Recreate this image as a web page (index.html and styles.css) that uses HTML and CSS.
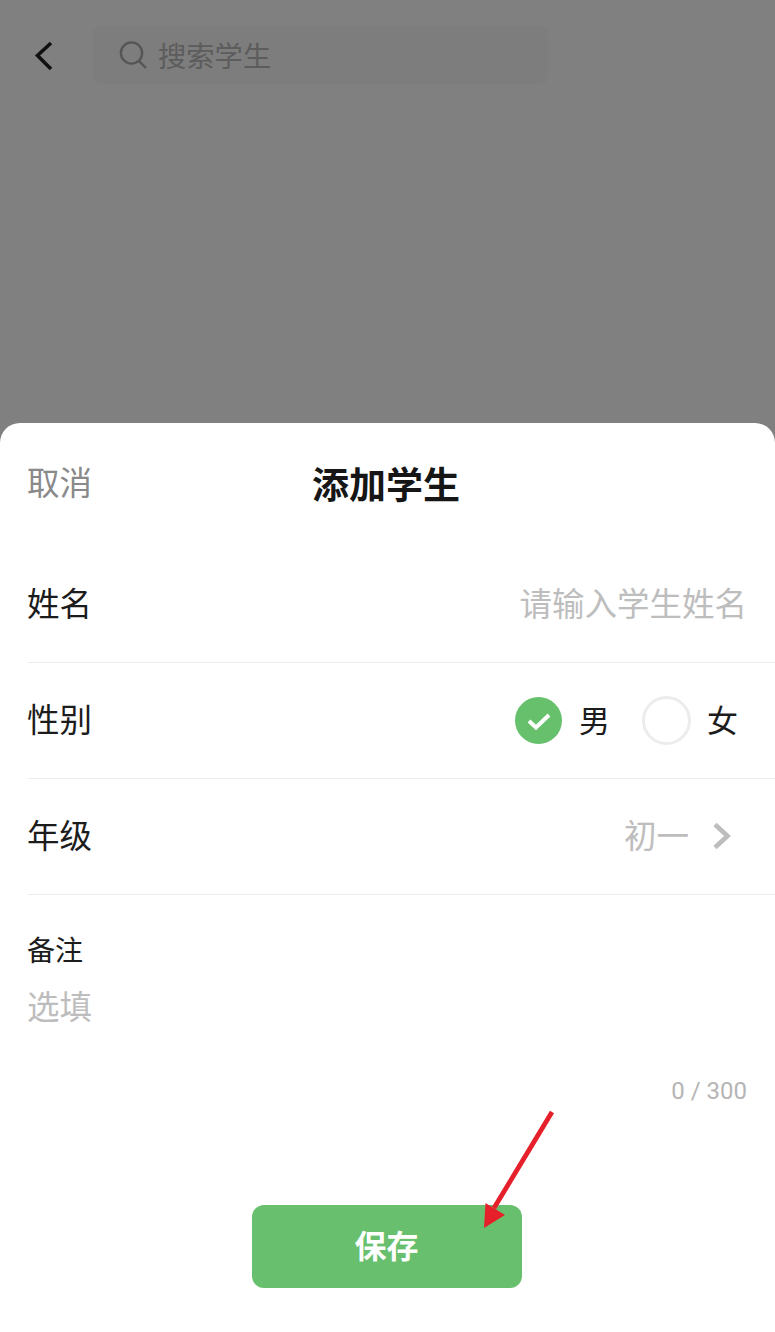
FILE: index.html
```html
<!DOCTYPE html>
<html lang="zh-CN">
<head>
<meta charset="utf-8">
<title>添加学生</title>
<link rel="stylesheet" href="styles.css">
</head>
<body>
<div class="page">
  <header class="topbar">
    <svg class="back" width="24" height="32" viewBox="0 0 24 32"><path d="M19 3 5.500 15.500 19 29" fill="none" stroke="#111" stroke-width="3.600"/></svg>
    <div class="search">
      <svg class="search-icon" width="30" height="30" viewBox="0 0 30 30"><circle cx="13.5" cy="13" r="10.6" fill="none" stroke="#555" stroke-width="2.4"/><path d="M21 21l7 7" stroke="#555" stroke-width="2.4" fill="none"/></svg>
      <span class="search-text">搜索学生</span>
    </div>
  </header>
  <section class="sheet">
    <div class="sheet-head">
      <span class="cancel">取消</span>
      <h1 class="title">添加学生</h1>
    </div>
    <div class="row row-name">
      <span class="label">姓名</span>
      <span class="placeholder">请输入学生姓名</span>
    </div>
    <div class="row">
      <span class="label">性别</span>
      <div class="radios">
        <span class="radio radio-on"><svg width="26" height="20" viewBox="0 0 26 20"><path d="M3 10l7 6.500L23 4" fill="none" stroke="#fff" stroke-width="4"/></svg></span>
        <span class="radio-label">男</span>
        <span class="radio radio-off"></span>
        <span class="radio-label">女</span>
      </div>
    </div>
    <div class="row">
      <span class="label">年级</span>
      <div class="picker">
        <span class="placeholder">初一</span>
        <svg width="20" height="28" viewBox="0 0 20 28"><path d="M3 2.500 15.500 14 3 25.500" fill="none" stroke="#bdbdbd" stroke-width="4.600"/></svg>
      </div>
    </div>
    <div class="note">
      <div class="note-label">备注</div>
      <div class="note-input">选填</div>
      <div class="count">0 / 300</div>
    </div>
    <div class="actions">
      <button class="save">保存</button>
    </div>
  </section>
  <svg class="arrow" width="775" height="1332" viewBox="0 0 775 1332"><path d="M552 1112 494 1208" stroke="#e5202a" stroke-width="4.800" fill="none"/><path d="M484 1228 485.500 1203 505 1215z" fill="#e5202a"/></svg>
</div>
</body>
</html>
```
FILE: styles.css
```css
* { box-sizing: border-box; }
html, body { margin: 0; padding: 0; }
body {
  width: 775px;
  height: 1332px;
  overflow: hidden;
  font-family: "Noto Sans CJK SC", "Liberation Sans", sans-serif;
  background: #808080;
}
.page {
  position: relative;
  height: 1332px;
  display: flex;
  flex-direction: column;
}
.topbar {
  height: 423px;
  padding: 26px 227px 0 32px;
  display: flex;
  align-items: flex-start;
  gap: 37px;
}
.back { margin-top: 14px; flex: none; }
.search {
  flex: 1;
  height: 58px;
  background: #7d7d7d;
  border-radius: 8px;
  display: flex;
  align-items: center;
  padding-left: 25px;
  gap: 10px;
}
.search-icon { flex: none; }
.search-text { font-size: 28.3px; line-height: 1; color: #5c5c5c; }
.sheet {
  flex: 1;
  background: #fff;
  border-radius: 20px 20px 0 0;
  padding-left: 28px;
  display: flex;
  flex-direction: column;
}
.sheet-head {
  position: relative;
  height: 125px;
  padding-top: 34px;
}
.cancel { font-size: 32.5px; line-height: 48px; color: #8a8a8a; display: block; margin-left: -1px; }
.title {
  position: absolute;
  left: -28px;
  right: 3px;
  top: 36px;
  margin: 0;
  text-align: center;
  font-size: 37px;
  line-height: 48px;
  font-weight: 700;
  color: #161616;
}
.row {
  height: 116px;
  display: flex;
  align-items: center;
  justify-content: space-between;
  border-bottom: 1px solid #ececec;
  padding-right: 30px;
}
.row-name { height: 115px; padding-right: 28px; }
.label { font-size: 32.5px; line-height: 48px; color: #1c1c1c; margin: 0 0 6px -1px; }
.placeholder { font-size: 32.5px; line-height: 48px; color: #bdbdbd; margin-bottom: 6px; }
.radios { display: flex; align-items: center; padding-right: 7px; }
.radio {
  width: 47px;
  height: 47px;
  border-radius: 50%;
  display: flex;
  align-items: center;
  justify-content: center;
}
.radio-on { background: #66c06c; }
.radio-off { border: 3px solid #ececec; width: 49px; height: 49px; margin-left: 32px; }
.radio-label { font-size: 31px; line-height: 48px; color: #1c1c1c; margin: 0 0 3px 17px; }
.radio-off + .radio-label { margin-left: 16px; }
.picker { display: flex; align-items: center; gap: 23px; padding-right: 13px; }
.picker svg { margin-bottom: 2px; }
.note { height: 229px; padding-right: 28px; padding-top: 32px; }
.note-label { font-size: 28px; line-height: 44px; color: #1c1c1c; margin-left: -1px; }
.note-input { font-size: 32.5px; line-height: 48px; color: #bdbdbd; margin: 10px 0 0 -1px; }
.count {
  font-family: "Roboto", "Liberation Sans", sans-serif;
  font-size: 24px;
  line-height: 32px;
  color: #b5b5b5;
  text-align: right;
  margin-top: 46px;
}
.actions { display: flex; justify-content: center; margin-left: -30px; margin-top: 81px; }
.save {
  width: 270px;
  height: 83px;
  border: 0;
  border-radius: 12px;
  background: #68c06e;
  color: #fff;
  font-family: inherit;
  font-size: 32px;
  font-weight: 700;
  padding: 0 0 6px;
}
.arrow { position: absolute; left: 0; top: 0; pointer-events: none; }
```
